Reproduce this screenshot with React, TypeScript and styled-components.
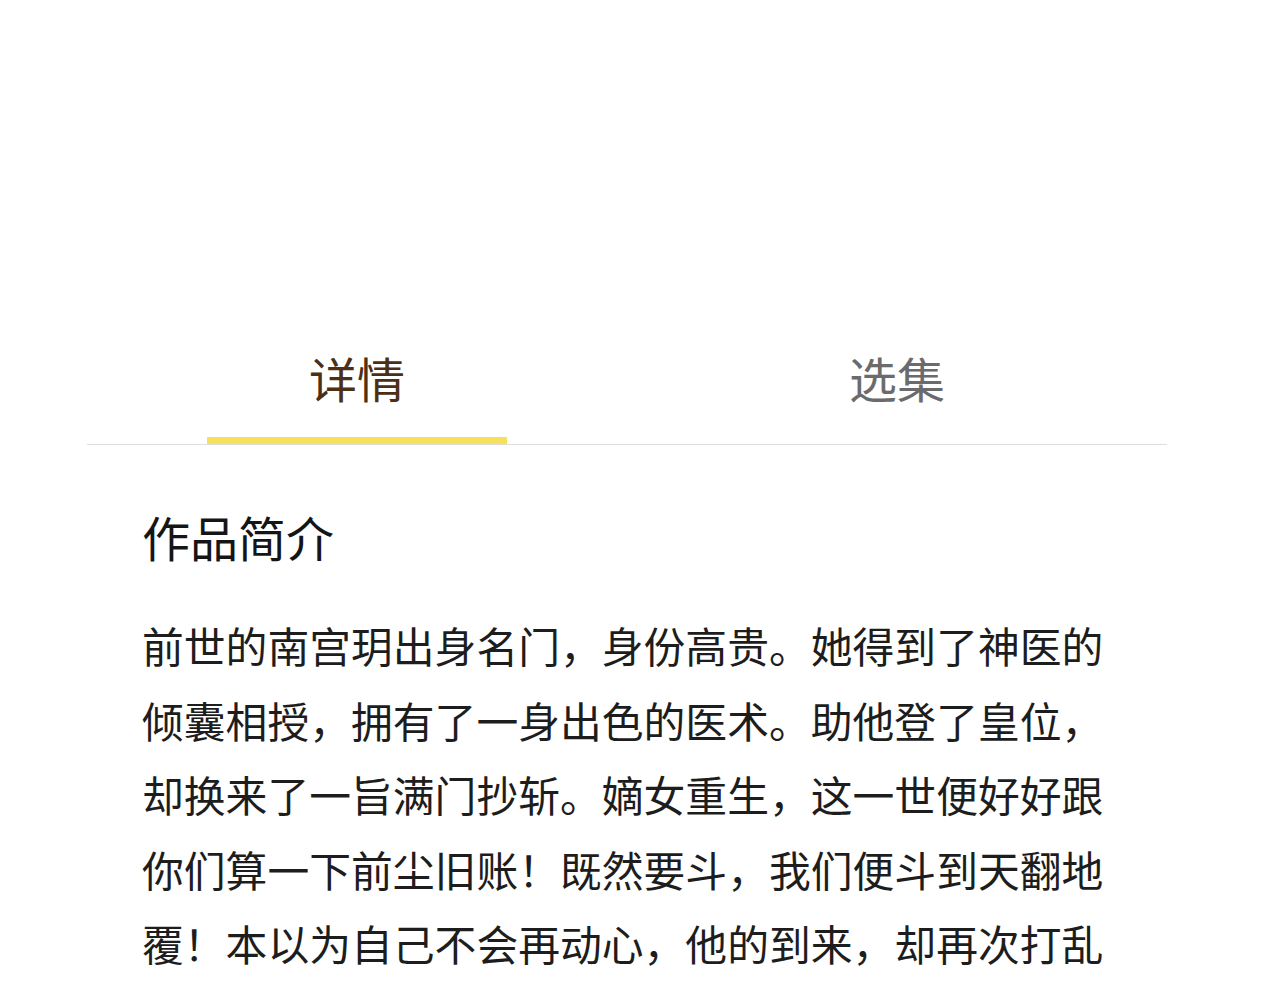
import React, { useState } from "react";
import styled, { createGlobalStyle } from "styled-components";

const GlobalStyle = createGlobalStyle`
  html, body {
    margin: 0;
    padding: 0;
    background: #ffffff;
    font-family: "Noto Sans CJK SC", "Noto Sans", sans-serif;
  }
`;

const Page = styled.div`
  width: 1280px;
  height: 1000px;
  overflow: hidden;
  padding-top: 318px;
  box-sizing: border-box;
`;

const TabBar = styled.div`
  display: flex;
  width: 1080px;
  margin-left: 87px;
  height: 127px;
  box-sizing: border-box;
  border-bottom: 1px solid #dedede;
`;

const Tab = styled.div<{ $active?: boolean }>`
  position: relative;
  flex: 1;
  display: flex;
  align-items: center;
  justify-content: center;
  padding-bottom: 9px;
  font-size: 48px;
  color: ${(p) => (p.$active ? "#4b3015" : "#6b6b6b")};
  cursor: pointer;
`;

const Indicator = styled.span`
  position: absolute;
  left: 50%;
  bottom: 0;
  width: 300px;
  height: 7px;
  margin-left: -150px;
  background: #f5e15c;
`;

const Content = styled.div`
  padding: 0 142px;
`;

const SectionTitle = styled.h2`
  margin: 61px 0 0;
  font-size: 48px;
  font-weight: 400;
  line-height: 60px;
  color: #151515;
`;

const Intro = styled.p`
  margin: 42px 0 0;
  width: 964px;
  font-size: 41.8px;
  line-height: 74.5px;
  color: #1d1d1d;
`;

const tabs = ["详情", "选集"];

const intro =
  "前世的南宫玥出身名门，身份高贵。她得到了神医的倾囊相授，拥有了一身出色的医术。助他登了皇位，却换来了一旨满门抄斩。嫡女重生，这一世便好好跟你们算一下前尘旧账！既然要斗，我们便斗到天翻地覆！本以为自己不会再动心，他的到来，却再次打乱了她的心。【独家首发，每周更新】精彩不容错过！";

export default function App() {
  const [current, setCurrent] = useState(0);
  return (
    <>
      <GlobalStyle />
      <Page>
        <TabBar>
          {tabs.map((label, i) => (
            <Tab key={label} $active={i === current} onClick={() => setCurrent(i)}>
              {label}
              {i === current && <Indicator />}
            </Tab>
          ))}
        </TabBar>
        <Content>
          <SectionTitle>作品简介</SectionTitle>
          <Intro>{intro}</Intro>
        </Content>
      </Page>
    </>
  );
}
